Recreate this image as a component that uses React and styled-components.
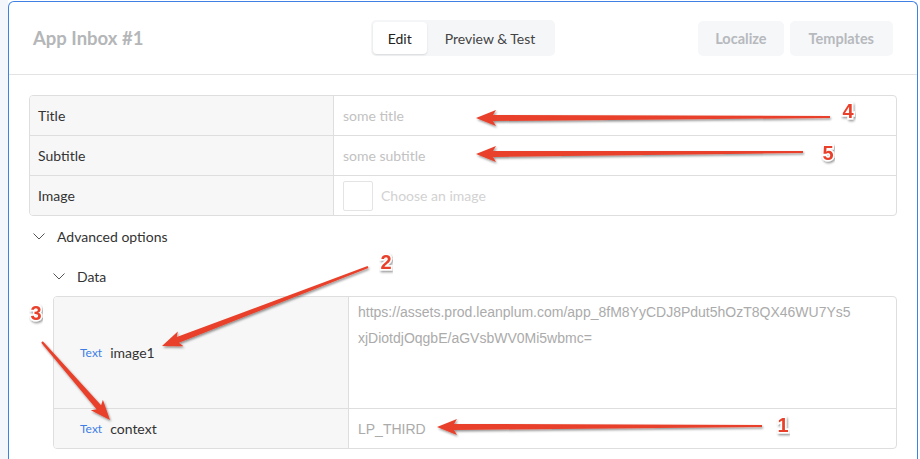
import React from 'react';
import styled, { createGlobalStyle } from 'styled-components';

const GlobalStyle = createGlobalStyle`
    html, body {
        margin: 0;
        padding: 0;
        background: #ffffff;
    }
    body {
        font-family: Lato, "Open Sans", sans-serif;
        color: #333;
    }
`;

const Page = styled.div`
    position: relative;
    width: 920px;
    height: 459px;
    overflow: hidden;
    box-sizing: border-box;
    padding: 1px 2px 0 0;
    border-left: 8px solid #f3f6fb;
`;

const Card = styled.section`
    box-sizing: border-box;
    height: 470px;
    border: 1px solid #3f80e4;
    border-bottom: none;
    border-radius: 6px 6px 0 0;
    background: #fff;
`;

const Header = styled.header`
    display: grid;
    grid-template-columns: 1fr auto 1fr;
    align-items: center;
    height: 72px;
    padding: 0 24px;
    border-bottom: 1px solid #e3e3e3;
`;

const Heading = styled.h1`
    margin: 0;
    font-size: 18.5px;
    font-weight: 700;
    color: #b4b6b8;
`;

const TabGroup = styled.div`
    display: flex;
    padding: 2px;
    border-radius: 5px;
    background: #f5f6f8;
`;

const Tab = styled.button`
    height: 32px;
    padding: 0 ${({ active }) => (active ? '15px' : '18px')};
    border: none;
    border-radius: 4px;
    font-family: inherit;
    font-size: 14px;
    color: ${({ active }) => (active ? '#222' : '#444')};
    background: ${({ active }) => (active ? '#fff' : 'transparent')};
    box-shadow: ${({ active }) => (active ? '0 1px 2px rgba(0,0,0,.12)' : 'none')};
`;

const Actions = styled.div`
    display: flex;
    justify-content: flex-end;
    gap: 6px;
`;

const GhostButton = styled.button`
    height: 35px;
    padding: 0 ${({ wide }) => (wide ? '19px' : '17px')};
    border: none;
    border-radius: 5px;
    font-family: inherit;
    font-size: 14.5px;
    font-weight: 700;
    color: #b6b9bd;
    background: #f6f7f9;
`;

const Body = styled.div`
    padding: 20px 20px 0 20px;
`;

const FieldTable = styled.div`
    border: 1px solid #dedede;
    border-radius: 4px;
    overflow: hidden;
`;

const FieldRow = styled.div`
    display: grid;
    grid-template-columns: ${({ labelWidth }) => labelWidth}px 1fr;
    min-height: ${({ tall }) => (tall ? 111 : 39)}px;
    & + & {
        border-top: 1px solid #dedede;
    }
`;

const Label = styled.div`
    display: flex;
    align-items: center;
    gap: 8px;
    padding-left: ${({ indent }) => indent}px;
    background: #f7f7f7;
    border-right: 1px solid #dedede;
    font-size: 14px;
    color: #333;
`;

const TypeTag = styled.span`
    font-size: 12px;
    color: #3d7ee6;
`;

const Value = styled.div`
    display: flex;
    align-items: ${({ top }) => (top ? 'flex-start' : 'center')};
    gap: 8px;
    padding: ${({ top }) => (top ? '2px 39px 0 9px' : '0 9px')};
    font-size: 14px;
    color: #c2c2c2;
`;

const DataValue = styled.span`
    font-family: "Liberation Sans", Arial, sans-serif;
    font-size: 14px;
    line-height: 26px;
    color: #ababab;
    word-break: break-all;
`;

const ImageBox = styled.span`
    width: 28px;
    height: 28px;
    border: 1px solid #e4e4e4;
    border-radius: 2px;
`;

const Muted = styled.span`
    color: #d2d2d2;
`;

const Toggle = styled.div`
    display: flex;
    align-items: center;
    gap: 12px;
    height: 40px;
    padding-left: ${({ indent }) => indent}px;
    font-size: 14px;
    color: #333;
`;

const Nested = styled.div`
    margin-left: 24px;
`;

const Overlay = styled.svg`
    position: absolute;
    top: 0;
    left: -8px;
    pointer-events: none;
`;

const Chevron = () => (
    <svg width="12" height="7" viewBox="0 0 12 7">
        <path d="M0.5 0.5 L6 6 L11.5 0.5" fill="none" stroke="#555" strokeWidth="1" />
    </svg>
);

const arrowPoints = ([x1, y1], [x2, y2]) => {
    const len = Math.hypot(x2 - x1, y2 - y1);
    const dx = (x2 - x1) / len;
    const dy = (y2 - y1) / len;
    const nx = -dy;
    const ny = dx;
    const headLen = 17;
    const neckX = x2 - dx * headLen;
    const neckY = y2 - dy * headLen;
    const backX = x2 - dx * (headLen + 3);
    const backY = y2 - dy * (headLen + 3);
    const pts = [
        [x1 + nx * 1, y1 + ny * 1],
        [neckX + nx * 3, neckY + ny * 3],
        [backX + nx * 8, backY + ny * 8],
        [x2, y2],
        [backX - nx * 8, backY - ny * 8],
        [neckX - nx * 3, neckY - ny * 3],
        [x1 - nx * 1, y1 - ny * 1],
    ];
    return pts.map(([x, y]) => `${x.toFixed(1)},${y.toFixed(1)}`).join(' ');
};

const annotations = [
    { n: '4', from: [830, 117], to: [476, 118], label: [848, 111] },
    { n: '5', from: [803, 152], to: [476, 154], label: [828, 153] },
    { n: '2', from: [368, 267], to: [162, 346], label: [386, 262] },
    { n: '3', from: [42, 342], to: [110, 420], label: [36, 313] },
    { n: '1', from: [762, 426], to: [437, 427], label: [783, 425] },
];

const fields = [
    { label: 'Title', placeholder: 'some title' },
    { label: 'Subtitle', placeholder: 'some subtitle' },
];

const data = [
    {
        key: 'image1',
        value: 'https://assets.prod.leanplum.com/app_8fM8YyCDJ8Pdut5hOzT8QX46WU7Ys5xjDiotdjOqgbE/aGVsbWV0Mi5wbmc=',
        tall: true,
    },
    { key: 'context', value: 'LP_THIRD' },
];

const App = () => {
    return (
        <>
            <GlobalStyle />
            <Page>
                <Card>
                    <Header>
                        <Heading>App Inbox #1</Heading>
                        <TabGroup>
                            <Tab active>Edit</Tab>
                            <Tab>Preview &amp; Test</Tab>
                        </TabGroup>
                        <Actions>
                            <GhostButton>Localize</GhostButton>
                            <GhostButton wide>Templates</GhostButton>
                        </Actions>
                    </Header>
                    <Body>
                        <FieldTable>
                            {fields.map((f) => (
                                <FieldRow key={f.label} labelWidth={304}>
                                    <Label indent={8}>{f.label}</Label>
                                    <Value>{f.placeholder}</Value>
                                </FieldRow>
                            ))}
                            <FieldRow labelWidth={304}>
                                <Label indent={8}>Image</Label>
                                <Value>
                                    <ImageBox />
                                    <Muted>Choose an image</Muted>
                                </Value>
                            </FieldRow>
                        </FieldTable>
                        <Toggle indent={4}>
                            <Chevron />
                            Advanced options
                        </Toggle>
                        <Nested>
                            <Toggle indent={-7}>
                                <Chevron />
                                Data
                            </Toggle>
                            <FieldTable>
                                {data.map((d) => (
                                    <FieldRow key={d.key} labelWidth={295} tall={d.tall}>
                                        <Label indent={26}>
                                            <TypeTag>Text</TypeTag>
                                            {d.key}
                                        </Label>
                                        <Value top={d.tall}>
                                            <DataValue>{d.value}</DataValue>
                                        </Value>
                                    </FieldRow>
                                ))}
                            </FieldTable>
                        </Nested>
                    </Body>
                </Card>
                <Overlay width="920" height="459" viewBox="0 0 920 459">
                    <defs>
                        <filter id="shadow" x="-10%" y="-50%" width="120%" height="200%">
                            <feDropShadow dx="1" dy="1.5" stdDeviation="1" floodColor="#000" floodOpacity="0.45" />
                        </filter>
                    </defs>
                    {annotations.map((a) => (
                        <g key={a.n}>
                            <polygon points={arrowPoints(a.from, a.to)} fill="#e8402a" filter="url(#shadow)" />
                            <text
                                x={a.label[0]}
                                y={a.label[1] + 7}
                                textAnchor="middle"
                                fontFamily="'Liberation Sans', Arial, sans-serif"
                                fontWeight="700"
                                fontSize="20"
                                fill="#e8402a"
                                stroke="#fff"
                                strokeWidth="3"
                                paintOrder="stroke"
                                filter="url(#shadow)"
                            >
                                {a.n}
                            </text>
                        </g>
                    ))}
                </Overlay>
            </Page>
        </>
    );
};

export default App;
